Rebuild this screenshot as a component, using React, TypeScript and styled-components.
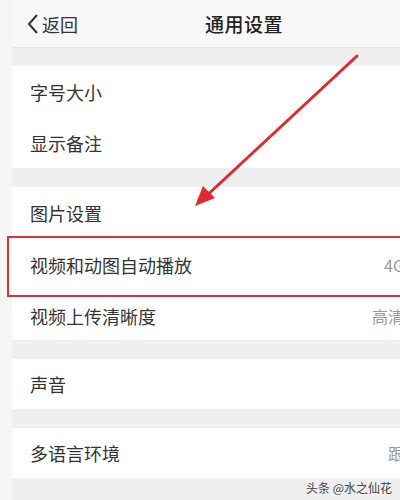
import type { FC } from "react";
import styled, { createGlobalStyle } from "styled-components";

interface SettingItem {
  label: string;
  value?: string;
  highlighted?: boolean;
}

const groups: SettingItem[][] = [
  [{ label: "字号大小" }, { label: "显示备注" }],
  [
    { label: "图片设置" },
    { label: "视频和动图自动播放", value: "4G", highlighted: true },
    { label: "视频上传清晰度", value: "高清" },
  ],
  [{ label: "声音" }],
  [{ label: "多语言环境", value: "跟" }],
];

const GlobalStyle = createGlobalStyle`
  html, body {
    margin: 0;
    padding: 0;
    background: #f6f6f6;
    font-family: "Noto Sans CJK SC", "Noto Sans", sans-serif;
    overflow: hidden;
  }
`;

const Screen = styled.div`
  position: relative;
  width: 400px;
  height: 500px;
  overflow: hidden;
  background: #f6f6f6;
`;

const Header = styled.header`
  height: 48px;
  display: flex;
  align-items: center;
  background: #f8f8f8;
  border-bottom: 1px solid #e2e2e2;
  margin-left: 12px;
  box-sizing: border-box;
`;

const BackButton = styled.button`
  display: flex;
  align-items: center;
  gap: 2px;
  background: none;
  border: none;
  padding: 0 0 0 14px;
  font-family: inherit;
  font-size: 18px;
  color: #333;
  cursor: pointer;
`;

const Title = styled.h1`
  margin: 0 0 0 127px;
  font-size: 19px;
  font-weight: 500;
  color: #222;
  letter-spacing: 0.5px;
`;

const Content = styled.main`
  margin-left: 12px;
  background: #efefef;
  padding-top: 18px;
  display: flex;
  flex-direction: column;
  gap: 19px;
  height: 452px;
`;

const Group = styled.section`
  background: #fff;
`;

const Row = styled.div<{ $highlighted?: boolean; $height: number }>`
  position: relative;
  height: ${(p) => p.$height}px;
  display: flex;
  align-items: center;
  justify-content: space-between;
  padding: 0 0 0 18px;
  font-size: 18px;
  color: #333;

  ${(p) =>
    p.$highlighted &&
    `
    &::after {
      content: "";
      position: absolute;
      left: -5px;
      right: -20px;
      top: -2px;
      bottom: -5px;
      border: 2px solid #d9343a;
      pointer-events: none;
      z-index: 2;
    }
  `}
`;

const Value = styled.span`
  font-size: 16px;
  color: #999;
  white-space: nowrap;
  margin-right: -4px;
`;

const Arrow = styled.svg`
  position: absolute;
  left: 0;
  top: 0;
  pointer-events: none;
  z-index: 3;
`;

const Watermark = styled.span`
  position: absolute;
  right: 8px;
  bottom: 4px;
  font-size: 12px;
  color: #444;
  z-index: 3;
`;

const rowHeights = [
  [52, 50],
  [51, 54, 48],
  [50],
  [50],
];

const App: FC = () => (
  <Screen>
    <GlobalStyle />
    <Header>
      <BackButton>
        <svg width="14" height="22" viewBox="0 0 14 22">
          <path d="M11 2 L3 11 L11 20" fill="none" stroke="#333" strokeWidth="2" />
        </svg>
        返回
      </BackButton>
      <Title>通用设置</Title>
    </Header>
    <Content>
      {groups.map((group, gi) => (
        <Group key={gi}>
          {group.map((item, i) => (
            <Row
              key={item.label}
              $highlighted={item.highlighted}
              $height={rowHeights[gi][i]}
            >
              {item.label}
              {item.value && <Value>{item.value}</Value>}
            </Row>
          ))}
        </Group>
      ))}
    </Content>
    <Arrow width="400" height="500" viewBox="0 0 400 500">
      <line x1="357" y1="56" x2="203" y2="199" stroke="#df2a30" strokeWidth="3" strokeLinecap="round" />
      <polygon points="195,206 203,186 215,198" fill="#df2a30" />
    </Arrow>
    <Watermark>头条 @水之仙花</Watermark>
  </Screen>
);

export default App;
